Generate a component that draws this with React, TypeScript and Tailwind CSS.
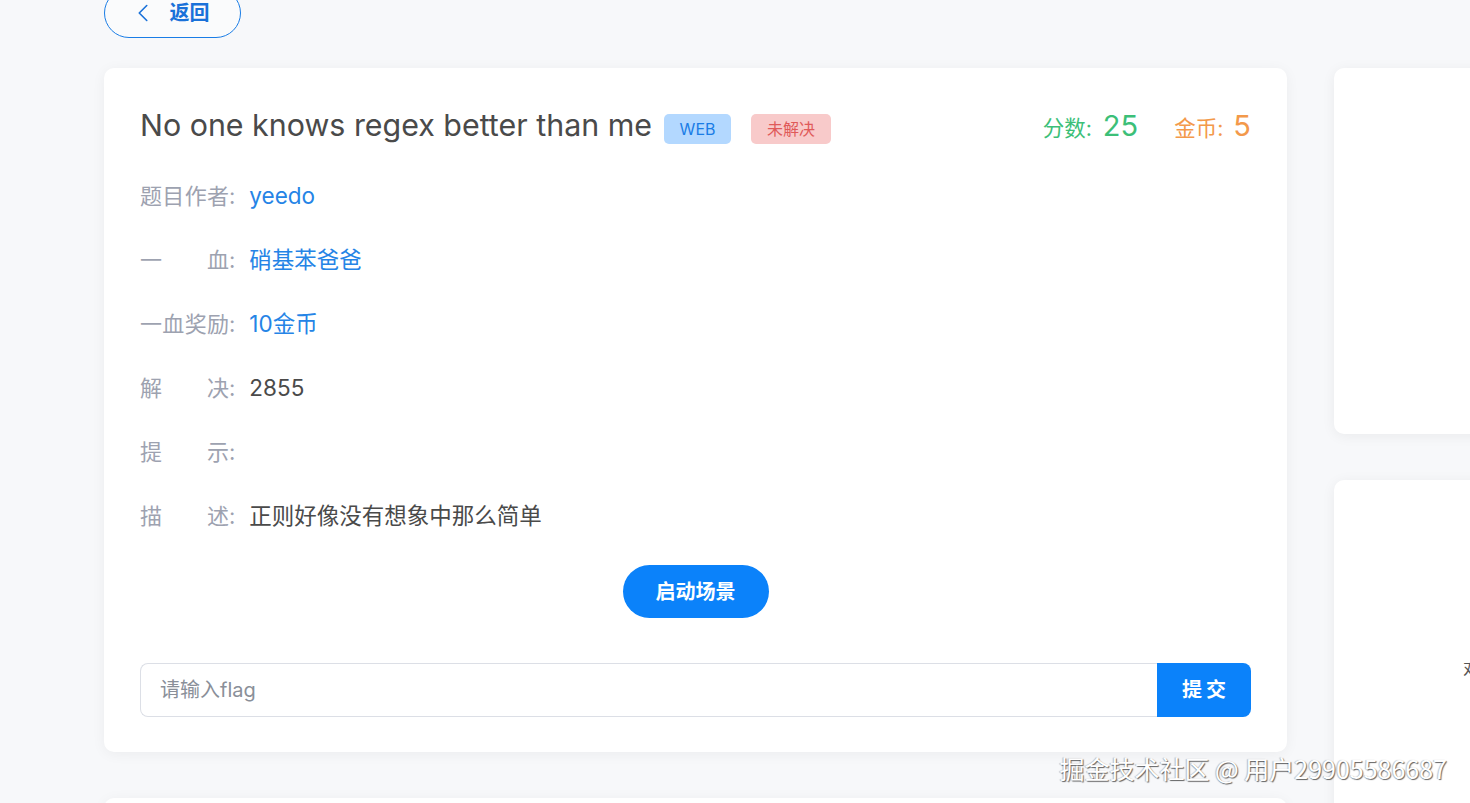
import { ChevronLeft } from "lucide-react";

const font = "font-['Inter','Noto_Sans_CJK_SC',sans-serif]";

const rows: { label: string; value: string; tone: string }[] = [
  { label: "题目作者", value: "yeedo", tone: "text-[#2584e6]" },
  { label: "一血", value: "硝基苯爸爸", tone: "text-[#2584e6]" },
  { label: "一血奖励", value: "10金币", tone: "text-[#2584e6]" },
  { label: "解决", value: "2855", tone: "text-[#4a4a4a]" },
  { label: "提示", value: "", tone: "text-[#4a4a4a]" },
  { label: "描述", value: "正则好像没有想象中那么简单", tone: "text-[#4a4a4a]" },
];

const InfoRow = ({ label, value, tone }: { label: string; value: string; tone: string }) => (
  <div className="flex items-center h-[64px]">
    <span className="flex items-center text-[22px] text-[#9da2b0]">
      <span className="w-[89px] text-justify [text-align-last:justify]">{label}</span>
      <span>:</span>
    </span>
    <span className={`ml-[14px] text-[22.5px] ${tone}`}>{value}</span>
  </div>
);

export default function App() {
  return (
    <div className={`relative h-[803px] w-full overflow-hidden bg-[#f7f8fa] ${font}`}>
      <div className="flex pl-[104px] gap-[47px]">
        <div className="w-[1183px] shrink-0 flex flex-col">
          <button className="mt-[-12px] w-[137px] h-[50px] rounded-full border border-[#1a7de6] bg-white/40 flex items-center justify-center gap-[12px] text-[#1a72d9]">
            <ChevronLeft size={30} strokeWidth={1.3} className="ml-[-8px]" />
            <span className="text-[20px] font-bold">返回</span>
          </button>

          <div className="mt-[30px] h-[684px] bg-white rounded-[10px] shadow-[0_2px_14px_rgba(0,0,0,0.05)] px-[36px] pt-[27px]">
            <div className="flex items-center justify-between h-[62px]">
              <div className="flex items-center">
                <h1 className="text-[30.4px] text-[#4a4a4a] font-normal">No one knows regex better than me</h1>
                <span className="ml-[12px] mt-[7px] h-[30px] w-[67px] rounded-[5px] bg-[#b3d8ff] text-[#1a7de6] text-[16px] flex items-center justify-center">
                  WEB
                </span>
                <span className="ml-[20px] mt-[7px] h-[30px] w-[80px] rounded-[5px] bg-[#f8caca] text-[#e05a5a] text-[16px] flex items-center justify-center">
                  未解决
                </span>
              </div>
              <div className="flex items-baseline">
                <span className="text-[21.5px] text-[#3cbf78]">分数:</span>
                <span className="ml-[11px] text-[29px] text-[#3cbf78]">25</span>
                <span className="ml-[36px] text-[21.5px] text-[#f3994a]">金币:</span>
                <span className="ml-[10px] text-[29px] text-[#f3994a]">5</span>
              </div>
            </div>

            <div className="mt-[7px] flex flex-col">
              {rows.map((r) => (
                <InfoRow key={r.label} {...r} />
              ))}
            </div>

            <div className="mt-[17px] flex justify-center">
              <button className="w-[146px] h-[53px] rounded-full bg-[#0b82fa] text-white text-[20px] font-bold">
                启动场景
              </button>
            </div>

            <div className="mt-[45px] flex h-[54px]">
              <div className="flex-1 border border-r-0 border-[#dcdfe6] rounded-l-[8px] flex items-center pl-[19px] text-[20px] text-[#8a8f99]">
                请输入flag
              </div>
              <button className="w-[94px] bg-[#0b82fa] rounded-r-[8px] text-white text-[20px] font-bold tracking-[4px] pl-[4px]">
                提交
              </button>
            </div>
          </div>

          <div className="mt-[46px] h-[200px] bg-white rounded-[10px] shadow-[0_2px_14px_rgba(0,0,0,0.05)]" />
        </div>

        <div className="w-[300px] shrink-0 flex flex-col gap-[46px] pt-[68px]">
          <div className="h-[366px] bg-white rounded-[10px] shadow-[0_2px_14px_rgba(0,0,0,0.06)]" />
          <div className="h-[400px] bg-white rounded-[10px] shadow-[0_2px_14px_rgba(0,0,0,0.06)] pt-[176px] pl-[129px]">
            <span className="text-[16px] text-[#555]">对</span>
          </div>
        </div>
      </div>

      <div className="absolute right-[23px] top-[750px] text-[25px] text-white [text-shadow:1px_1px_1px_rgba(0,0,0,0.6),-1px_0_1px_rgba(0,0,0,0.25)] font-['Noto_Sans_CJK_SC',sans-serif]">
        掘金技术社区 @ 用户29905586687
      </div>
    </div>
  );
}
